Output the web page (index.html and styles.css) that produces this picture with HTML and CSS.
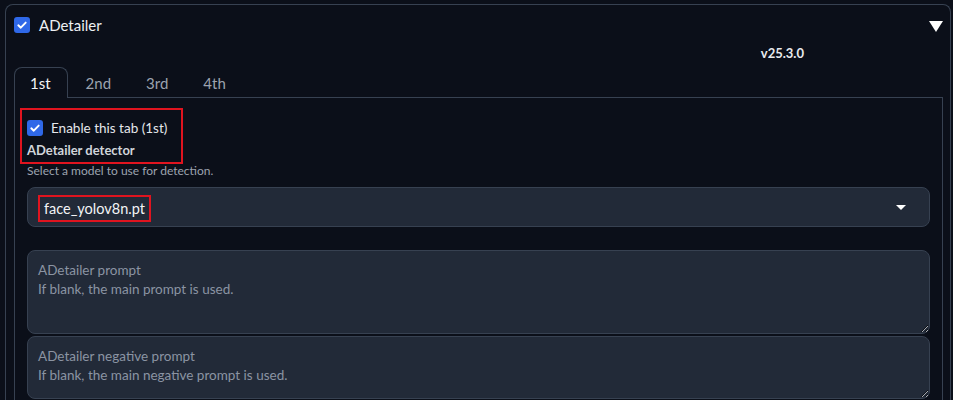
FILE: index.html
```html
<!DOCTYPE html>
<html>
<head>
<meta charset="utf-8">
<link rel="stylesheet" href="styles.css">
</head>
<body>
<div class="outer">
  <div class="header">
    <label class="head-check">
      <svg class="cb" width="16" height="16" viewBox="0 0 16 16"><rect width="16" height="16" rx="3" fill="#2f68e8"/><path d="M4.3 8.3 L6.8 10.7 L11.7 5.6" fill="none" stroke="#fff" stroke-width="1.9" stroke-linecap="round" stroke-linejoin="round"/></svg>
      <span class="head-title">ADetailer</span>
    </label>
    <svg class="collapse" width="14" height="11" viewBox="0 0 14 11"><path d="M0 0 H14 L7 11 Z" fill="#fff"/></svg>
  </div>
  <div class="version">v25.3.0</div>
  <div class="tabs">
    <div class="tab active">1st</div>
    <div class="tab">2nd</div>
    <div class="tab">3rd</div>
    <div class="tab">4th</div>
  </div>
  <div class="panel">
    <div class="mark-box">
      <label class="enable">
        <svg class="cb" width="16" height="16" viewBox="0 0 16 16"><rect width="16" height="16" rx="3" fill="#2f68e8"/><path d="M4.3 8.3 L6.8 10.7 L11.7 5.6" fill="none" stroke="#fff" stroke-width="1.9" stroke-linecap="round" stroke-linejoin="round"/></svg>
        <span>Enable this tab (1st)</span>
      </label>
      <div class="detector">ADetailer detector</div>
    </div>
    <div class="hint">Select a model to use for detection.</div>
    <div class="dropdown">
      <span class="mark-text">face_yolov8n.pt</span>
      <svg class="caret" width="10" height="5" viewBox="0 0 10 5"><path d="M0 0 H10 L5 5 Z" fill="#fff"/></svg>
    </div>
    <textarea class="prompt p1" placeholder="ADetailer prompt&#10;If blank, the main prompt is used."></textarea>
    <textarea class="prompt p2" placeholder="ADetailer negative prompt&#10;If blank, the main negative prompt is used."></textarea>
  </div>
</div>
</body>
</html>
```
FILE: styles.css
```css
html, body {
  margin: 0;
  padding: 0;
  background: #0b0f19;
  height: 400px;
  overflow: hidden;
}
body {
  font-family: "Lato", "Open Sans", sans-serif;
  color: #e5e7eb;
}
.outer {
  margin: 4px 2px 0 5px;
  border: 1px solid #374151;
  border-bottom: none;
  border-radius: 8px 8px 0 0;
  padding: 12px 7px 0 8px;
  height: 396px;
  box-sizing: border-box;
  overflow: hidden;
}
.header {
  display: flex;
  align-items: center;
  justify-content: space-between;
  height: 16px;
}
.head-check {
  display: flex;
  align-items: center;
  gap: 9px;
}
.cb { display: block; flex: none; }
.head-title {
  font-size: 15px;
  color: #eef0f3;
  line-height: 16px;
}
.collapse {
  display: block;
  margin-top: 2px;
}
.version {
  text-align: right;
  padding-right: 139px;
  font-size: 13px;
  font-weight: 700;
  color: #e8eaee;
  margin-top: 12px;
  line-height: 16px;
}
.tabs {
  display: flex;
  margin-top: 6px;
  height: 30px;
  position: relative;
  z-index: 1;
}
.tab {
  font-size: 15px;
  color: #9ca3af;
  line-height: 30px;
  padding: 0 17px 0 16px;
  border: 1px solid transparent;
  border-bottom: none;
  border-radius: 8px 8px 0 0;
}
.tab.active {
  color: #f3f4f6;
  border-color: #374151;
  background: #0b0f19;
  height: 31px;
  box-sizing: border-box;
  padding: 0 16px 0 15px;
}
.tab:nth-child(2) { padding-left: 17px; }
.panel {
  border: 1px solid #374151;
  border-bottom: none;
  padding: 10px 12px 0 12px;
  height: 320px;
  box-sizing: border-box;
}
.mark-box {
  display: inline-block;
  border: 2px solid #e0141f;
  padding: 10px 14px 3px 5px;
  margin-left: -7px;
}
.enable {
  display: flex;
  align-items: center;
  gap: 8px;
  font-size: 13.5px;
  color: #e5e7eb;
  line-height: 16px;
}
.detector {
  margin-top: 5px;
  font-size: 13px;
  font-weight: 700;
  color: #d1d5db;
  line-height: 18px;
}
.hint {
  font-size: 12px;
  color: #9ca3af;
  margin-top: -1px;
  line-height: 16px;
}
.dropdown {
  margin-top: 8px;
  height: 40px;
  box-sizing: border-box;
  background: #222a38;
  border: 1px solid #374151;
  border-radius: 8px;
  display: flex;
  align-items: center;
  justify-content: space-between;
  padding: 0 23px 0 10px;
}
.mark-text {
  border: 2px solid #e0141f;
  padding: 3px 4px 3px 4px;
  font-size: 14.5px;
  color: #f3f4f6;
  line-height: 17px;
  margin-top: 3px;
}
.caret { display: block; }
.prompt {
  display: block;
  width: 100%;
  box-sizing: border-box;
  background: #222a38;
  border: 1px solid #374151;
  border-radius: 8px;
  font-family: inherit;
  font-size: 13.5px;
  line-height: 19px;
  padding: 10px 10px;
  color: #e5e7eb;
  outline: none;
  resize: vertical;
  margin: 0;
}
.prompt::placeholder { color: #8b94a3; }
.p1 { margin-top: 23px; height: 84px; }
.p2 { margin-top: 2px; height: 63px; }
```
